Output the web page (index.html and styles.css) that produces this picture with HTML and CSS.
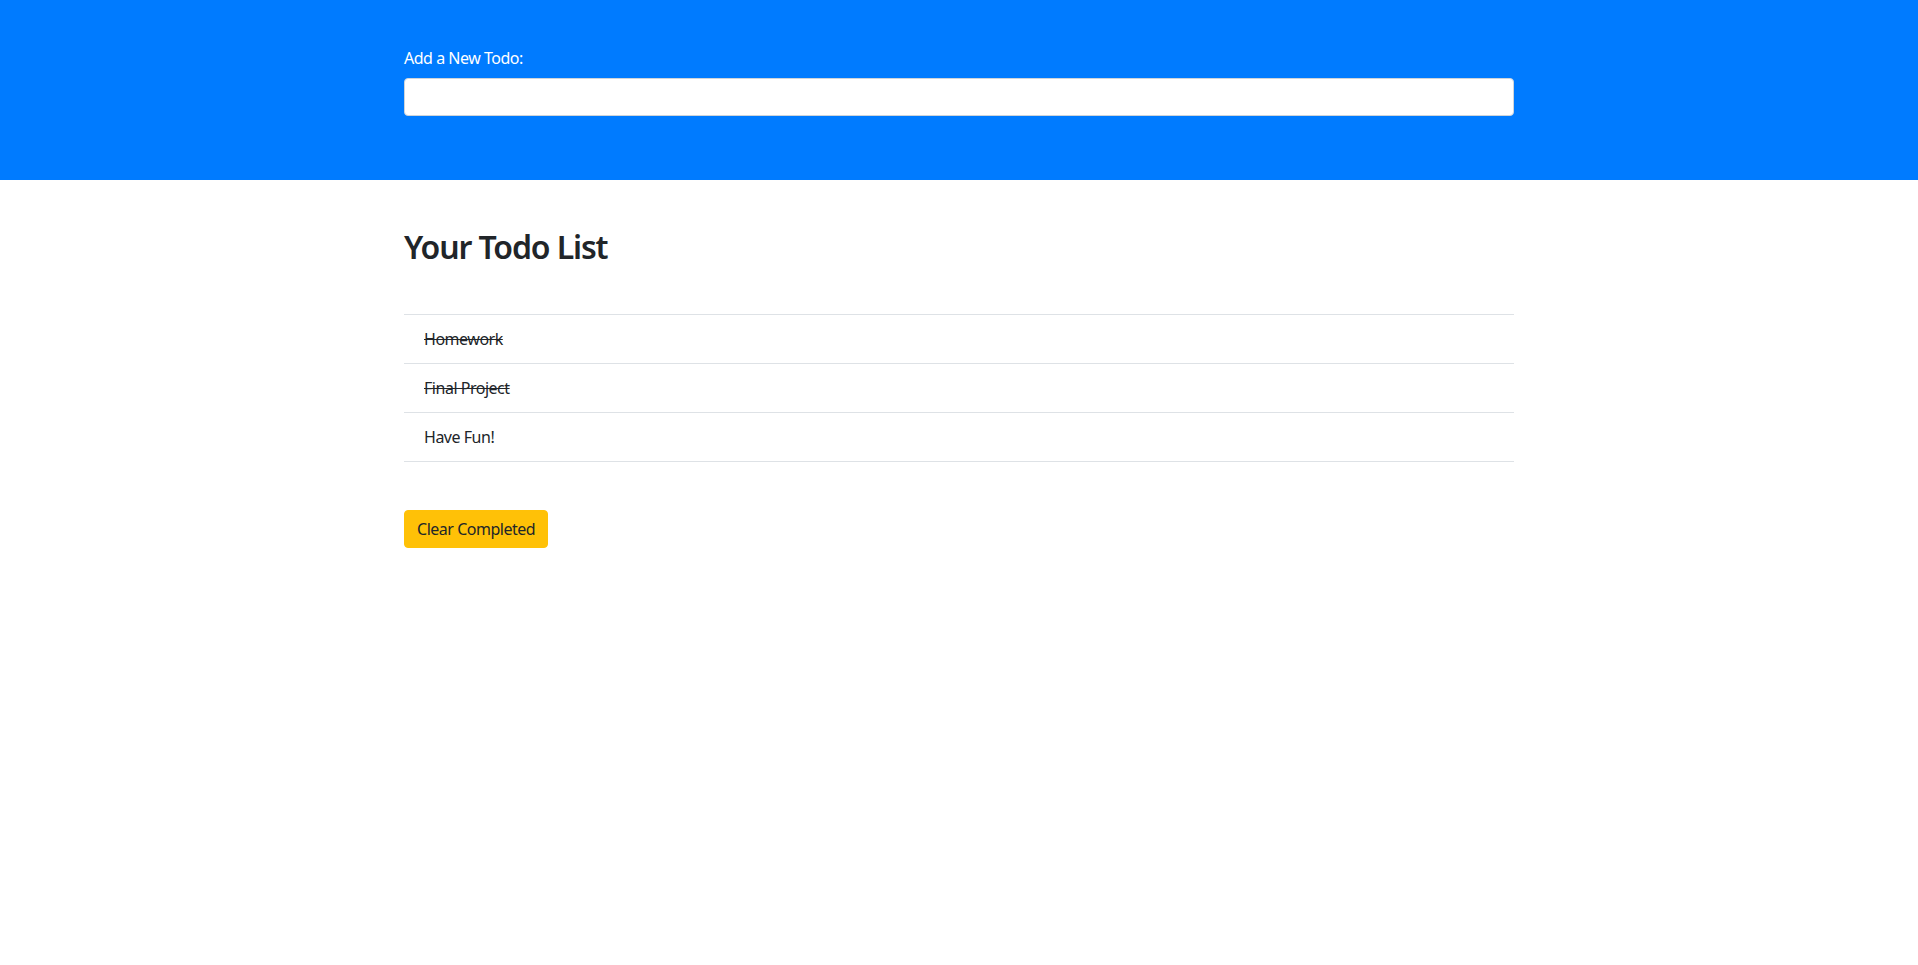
FILE: index.html
```html
<!DOCTYPE html>
<html lang="en">
<head>
<meta charset="utf-8">
<title>Todo</title>
<link rel="stylesheet" href="styles.css">
</head>
<body>
<header class="hero">
  <div class="container">
    <div class="form-group">
      <label class="label" for="newTodo">Add a New Todo:</label>
      <input class="input" id="newTodo" type="text">
    </div>
  </div>
</header>
<main class="container main">
  <h2 class="title">Your Todo List</h2>
  <ul class="list">
    <li class="item done">Homework</li>
    <li class="item done">Final Project</li>
    <li class="item">Have Fun!</li>
  </ul>
  <button class="btn" type="button">Clear Completed</button>
</main>
</body>
</html>
```
FILE: styles.css
```css
* { box-sizing: border-box; }
html, body { margin: 0; padding: 0; }
body {
  font-family: "Noto Sans", "Open Sans", sans-serif;
  font-size: 16px;
  line-height: 1.5;
  letter-spacing: -0.03em;
  color: #212529;
  background: #fff;
}
.container {
  width: 1140px;
  margin: 0 auto;
  padding: 0 15px;
}
.hero {
  background: #007bff;
  padding: 46px 0 48px;
}
.form-group { margin-bottom: 16px; }
.label {
  display: block;
  color: #fff;
  margin-bottom: 8px;
  font-size: 16px;
  line-height: 24px;
}
.input {
  display: block;
  width: 100%;
  height: 38px;
  border: 1px solid #ced4da;
  border-radius: 4px;
  background: #fff;
  padding: 6px 12px;
  font: inherit;
}
.main { padding-top: 48px; }
.title {
  margin: 0 0 48px;
  font-size: 32px;
  font-weight: 600;
  line-height: 1.2;
  letter-spacing: -0.035em;
}
.list {
  list-style: none;
  margin: 0 0 48px;
  padding: 0;
  border-top: 1px solid #dee2e6;
}
.item {
  padding: 12px 20px;
  border-bottom: 1px solid #dee2e6;
  line-height: 24px;
}
.done { text-decoration: line-through; }
.btn {
  display: inline-block;
  height: 38px;
  padding: 6px 12px;
  border: 1px solid #ffc107;
  border-radius: 4px;
  background: #ffc107;
  color: #212529;
  font: inherit;
  letter-spacing: -0.03em;
  line-height: 24px;
  cursor: pointer;
}
```
